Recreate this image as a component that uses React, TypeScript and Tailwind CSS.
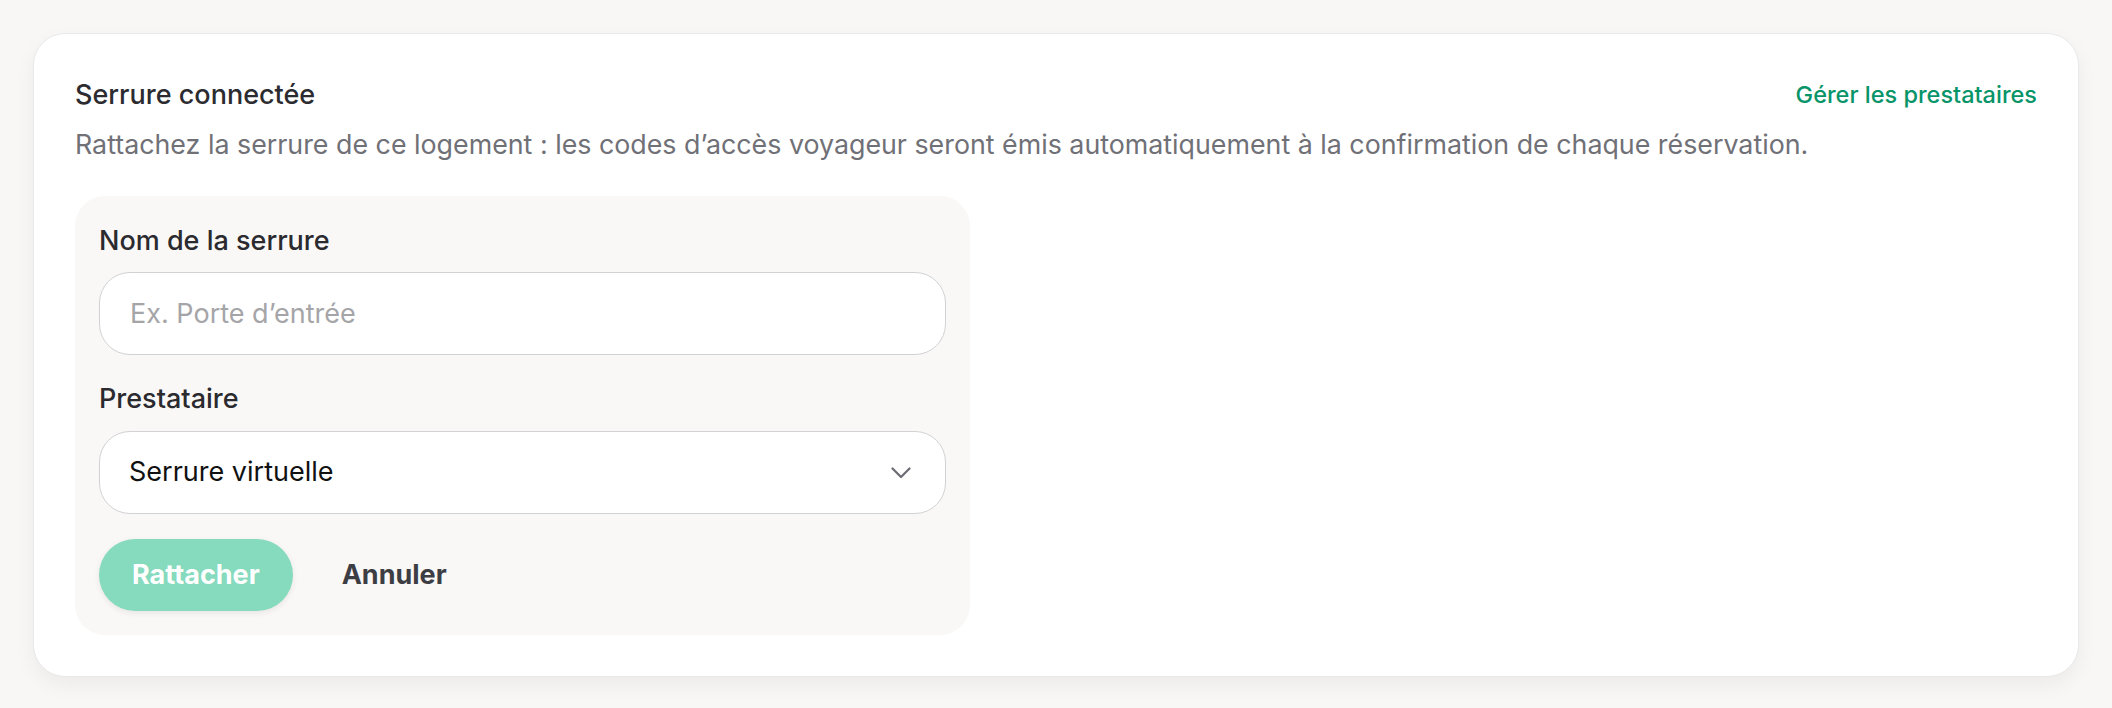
import { useState } from "react";

/*
 * Carte « Serrure connectée » : titre + lien prestataires, texte d'aide,
 * puis le petit formulaire de rattachement (nom, prestataire, actions).
 */

const PRESTATAIRES = ["Serrure virtuelle", "Nuki", "Igloohome", "TTLock"];

function Chevron() {
  return (
    <svg width="20" height="12" viewBox="0 0 20 12" fill="none" aria-hidden="true">
      <path d="M1.5 1.5l8.5 8.5 8.5-8.5" stroke="#6b6b72" strokeWidth="2.2" strokeLinecap="round" strokeLinejoin="round" />
    </svg>
  );
}

export default function App() {
  const [nom, setNom] = useState("");
  const [prestataire, setPrestataire] = useState(PRESTATAIRES[0]);

  return (
    <div className="min-h-screen bg-[#f8f7f5] p-[33px] font-['Inter',sans-serif]">
      <section className="rounded-[32px] border-[1.5px] border-[#e9e9e9] bg-white px-[41px] pb-[41px] pt-[42px] shadow-[0_8px_20px_rgba(0,0,0,0.05)]">
        <div className="flex items-center justify-between">
          <h2 className="text-[27px] font-medium leading-[38px] text-[#2b2b30]">Serrure connectée</h2>
          <a href="#" className="text-[23.5px] font-medium leading-[32px] text-[#069468]">
            Gérer les prestataires
          </a>
        </div>
        <p className="mt-[11px] text-[26.8px] leading-[38px] text-[#707077]">
          Rattachez la serrure de ce logement : les codes d’accès voyageur seront émis automatiquement à la
          confirmation de chaque réservation.
        </p>

        {/* Formulaire de rattachement */}
        <div className="mt-[33px] flex w-[895px] flex-col gap-[25px] rounded-[30px] bg-[#f9f8f6] px-[24px] pb-[24px] pt-[26px]">
          <label className="flex flex-col gap-[12px]">
            <span className="text-[27px] font-medium leading-[38px] text-[#2a2a2f]">Nom de la serrure</span>
            <input
              type="text"
              value={nom}
              onChange={(e) => setNom(e.target.value)}
              placeholder="Ex. Porte d’entrée"
              className="h-[83px] w-full rounded-[31px] border-[1.5px] border-[#d2d2d5] bg-white px-[30px] text-[27px] text-[#111] outline-none placeholder:text-[#a5a5a8]"
            />
          </label>

          <label className="flex flex-col gap-[13px]">
            <span className="text-[27px] font-medium leading-[38px] text-[#2a2a2f]">Prestataire</span>
            <div className="relative">
              <select
                value={prestataire}
                onChange={(e) => setPrestataire(e.target.value)}
                className="h-[83px] w-full appearance-none rounded-[31px] border-[1.5px] border-[#d2d2d5] bg-white px-[29px] text-[27px] text-[#111] outline-none"
              >
                {PRESTATAIRES.map((p) => (
                  <option key={p}>{p}</option>
                ))}
              </select>
              <span className="pointer-events-none absolute right-[35px] top-1/2 -translate-y-1/2">
                <Chevron />
              </span>
            </div>
          </label>

          <div className="flex items-center gap-[16px]">
            <button
              type="button"
              disabled={!nom}
              className="h-[72px] rounded-full bg-[#86dabd] px-[33px] text-[27px] font-bold text-white shadow-[0_2px_6px_rgba(0,0,0,0.08)]"
            >
              Rattacher
            </button>
            <button type="button" className="h-[72px] px-[33px] text-[27px] font-bold text-[#3d3d44]">
              Annuler
            </button>
          </div>
        </div>
      </section>
    </div>
  );
}
